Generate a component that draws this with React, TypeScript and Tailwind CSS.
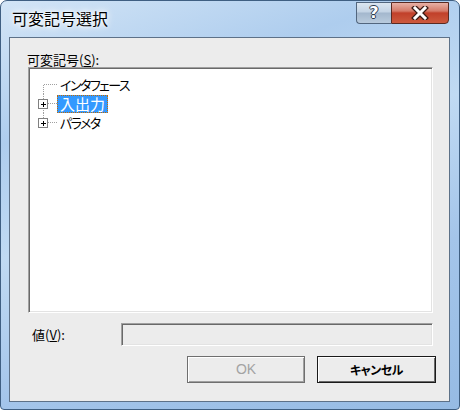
import React from "react";

function TreeConnector({ first, last, box }: { first?: boolean; last?: boolean; box?: boolean }) {
  return (
    <svg width="27" height="19" className="shrink-0" shapeRendering="crispEdges">
      <line
        x1="13.5"
        x2="13.5"
        y1={first ? 10 : 0}
        y2={last ? 10 : 19}
        stroke="#a0a0a0"
        strokeDasharray="1 1"
      />
      <line x1={box ? 18 : 14} x2="27" y1="9.5" y2="9.5" stroke="#a0a0a0" strokeDasharray="1 1" />
      {box && (
        <g>
          <rect x="8.5" y="5.5" width="9" height="9" fill="#fff" stroke="#808080" />
          <line x1="10.5" x2="15.5" y1="10" y2="10" stroke="#000" />
          <line x1="13" x2="13" y1="7.5" y2="12.5" stroke="#000" />
        </g>
      )}
    </svg>
  );
}

export default function App() {
  const jp = "font-['Noto_Sans_CJK_JP',sans-serif] [font-feature-settings:'palt']";
  return (
    <div className="w-[460px] h-[410px] overflow-hidden bg-white">
      <div className="w-[460px] h-[410px] flex flex-col rounded-t-[7px] rounded-b-[4px] border border-[#3f5f82] bg-[linear-gradient(160deg,#d3e5f6_0%,#aecdee_25%,#c0daf3_45%,#a4c5ea_70%,#96bbe4_100%)]">
        {/* Title bar */}
        <div className="h-[36px] shrink-0 flex items-start">
          <div
            className={`ml-[11px] mt-[7px] text-[16px] leading-[20px] text-black font-['Noto_Sans_CJK_JP',sans-serif] [text-shadow:0_0_6px_#fff,0_0_10px_#fff,0_0_3px_#fff]`}
          >
            可変記号選択
          </div>
          <div className="ml-auto mr-[10px] mt-[1px] flex">
            <div className="w-[35px] h-[22px] rounded-bl-[4px] border border-[#52667e] border-r-0 bg-[linear-gradient(180deg,#dbe6f1_0%,#c3d3e4_45%,#a3b7cd_50%,#b9cbdd_100%)] flex items-center justify-center">
              <span className="font-['DejaVu_Sans',sans-serif] font-bold text-[16px] leading-none text-white [text-shadow:1px_0_0_#2b3b4f,-1px_0_0_#2b3b4f,0_1px_0_#2b3b4f,0_-1px_0_#2b3b4f]">
                ?
              </span>
            </div>
            <div className="w-[58px] h-[22px] rounded-br-[4px] border border-[#5a2a22] bg-[linear-gradient(180deg,#e8b1a6_0%,#d57a68_40%,#c1402a_50%,#cd5a3e_100%)] flex items-center justify-center">
              <svg width="18" height="14" viewBox="0 0 18 14">
                <path d="M4 2 L14 12 M14 2 L4 12" stroke="#3a1a14" strokeWidth="5.5" strokeLinecap="square" />
                <path d="M4 2 L14 12 M14 2 L4 12" stroke="#ffffff" strokeWidth="3" strokeLinecap="square" />
              </svg>
            </div>
          </div>
        </div>

        {/* Client area */}
        <div className="ml-[8px] mr-[9px] mb-[7px] flex-1 border border-[#5d7188] bg-[#ececec] flex flex-col">
          <div className={`ml-[17px] mt-[14px] h-[15px] text-[13px] leading-[15px] text-black ${jp}`}>
            可変記号(<span className="underline">S</span>):
          </div>
          {/* Tree */}
          <div className="ml-[18px] w-[405px] h-[246px] bg-white border border-t-[#a0a0a0] border-l-[#a0a0a0] border-b-white border-r-white shadow-[inset_1px_1px_0_#696969,inset_-1px_-1px_0_#e3e3e3] pt-[7px] pl-[1px]">
            <div className="flex items-center h-[19px]">
              <TreeConnector first />
              <span className={`pl-[3px] text-[13px] tracking-[-1.5px] leading-[18px] text-black ${jp}`}>インタフェース</span>
            </div>
            <div className="flex items-center h-[19px]">
              <TreeConnector box />
              <span
                className={`h-[18px] px-[2px] bg-[#3399ff] border border-dotted border-[#c46a00] text-[15px] leading-[16px] text-white ${jp}`}
              >
                入出力
              </span>
            </div>
            <div className="flex items-center h-[19px]">
              <TreeConnector box last />
              <span className={`pl-[3px] text-[13px] tracking-[-1.5px] leading-[18px] text-black ${jp}`}>パラメタ</span>
            </div>
          </div>

          {/* Value row */}
          <div className="mt-[10px] flex items-center h-[23px]">
            <div className={`ml-[22px] w-[89px] text-[13px] leading-[15px] text-black ${jp}`}>
              値(<span className="underline">V</span>):
            </div>
            <div className="w-[312px] h-[23px] bg-[#ececec] border border-t-[#a0a0a0] border-l-[#a0a0a0] border-b-white border-r-white shadow-[inset_1px_1px_0_#696969,inset_-1px_-1px_0_#e3e3e3]" />
          </div>

          {/* Buttons */}
          <div className="mt-[10px] flex justify-end gap-[12px] mr-[13px]">
            <div className="w-[118px] h-[27px] border border-[#6f6f6f] bg-[#ececec] shadow-[inset_1px_1px_0_#ffffff,inset_-1px_-1px_0_#a0a0a0] flex items-center justify-center">
              <span className="font-['Liberation_Sans',sans-serif] text-[14px] text-[#a3a3a3]">OK</span>
            </div>
            <div className="w-[119px] h-[27px] border border-[#1a1a1a] bg-[#ececec] shadow-[inset_1px_1px_0_#ffffff,inset_-1px_-1px_0_#696969] flex items-center justify-center">
              <span className={`text-[12px] tracking-[-0.5px] font-bold text-black ${jp}`}>キャンセル</span>
            </div>
          </div>
        </div>
      </div>
    </div>
  );
}
